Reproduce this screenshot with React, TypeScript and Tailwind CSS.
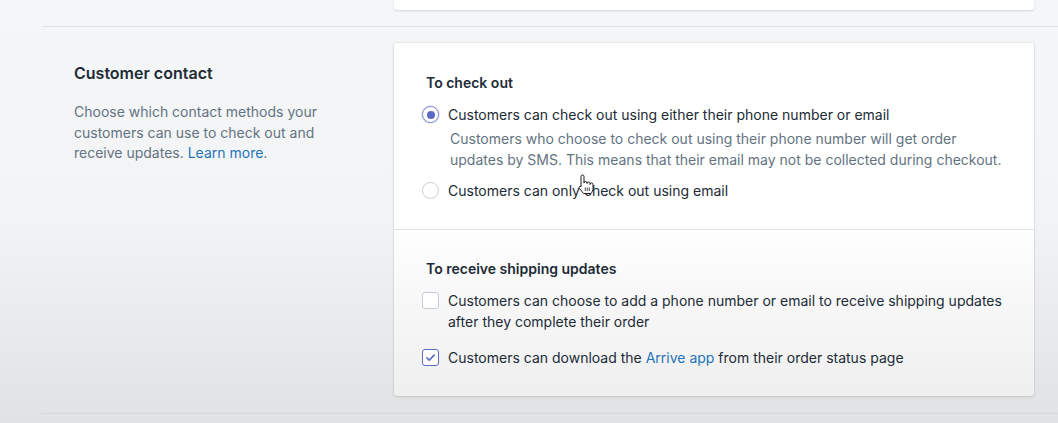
const Radio = ({ checked }: { checked?: boolean }) => (
  <span
    className={
      "mt-[2px] flex h-[17px] w-[17px] shrink-0 items-center justify-center rounded-full border bg-white " +
      (checked ? "border-[#7f88cc] shadow-[0_0_0_1px_#e3e5f5]" : "border-[#c4cdd5]")
    }
  >
    {checked && <span className="h-[8px] w-[8px] rounded-full bg-[#5c6ac4]" />}
  </span>
)

const Checkbox = ({ checked }: { checked?: boolean }) => (
  <span
    className={
      "mt-[2px] flex h-[17px] w-[17px] shrink-0 items-center justify-center rounded-[3px] border bg-white " +
      (checked ? "border-[#5c6ac4]" : "border-[#c4cdd5]")
    }
  >
    {checked && (
      <svg width="11" height="11" viewBox="0 0 12 12" fill="none">
        <path d="M2 6.3l2.6 2.6L10 3.4" stroke="#5c6ac4" strokeWidth="1.8" strokeLinecap="round" strokeLinejoin="round" />
      </svg>
    )}
  </span>
)

// mouse pointer caught in the screenshot
const HandCursor = () => (
  <svg className="absolute left-[577px] top-[174px]" width="17" height="21" viewBox="0 0 17 21">
    <path
      d="M4 2.5A1.5 1.5 0 0 1 7 2.5V9A1.5 1.5 0 0 1 10 9V9.5A1.5 1.5 0 0 1 13 9.5V10.5A1.5 1.5 0 0 1 16 10.5V14.5C16 16.5 15 18 14 19.5H6.5L2.2 14C1.5 13.1 2.6 11.8 3.6 12.5L4 13Z"
      fill="#fff"
      stroke="#1c1c1c"
      strokeWidth="1"
      strokeLinejoin="round"
    />
    <path d="M8.3 13.5v3.5M10.3 13.5v3.5M12.3 13.5v3.5" stroke="#1c1c1c" strokeWidth="0.8" />
  </svg>
)

const App = () => {
  return (
    <div className="relative min-h-screen w-full bg-gradient-to-b from-[#f4f6f8] via-[#f3f4f6] to-[#e1e2e4] font-['Inter',sans-serif] text-[14px] leading-[21px] text-[#212b36] antialiased">
      <div className="pl-[42px]">
        <div className="flex justify-end pr-[24px]">
          <div className="h-[10px] w-[640px] rounded-b-[3px] bg-white shadow-[0_1px_2px_rgba(63,63,68,0.18)]" />
        </div>

        <div className="mt-[16px] flex border-t border-[#dfe3e8] pt-[16px] pb-[17px]">
          <div className="w-[352px] shrink-0 pl-[32px] pt-[19px] pr-[36px]">
            <h2 className="text-[16px] font-semibold leading-[22px] text-[#212b36]">Customer contact</h2>
            <p className="mt-[18px] leading-[20.5px] text-[#637381]">
              Choose which contact methods your customers can use to check out and receive updates.{" "}
              <a className="text-[#1f73b7]">Learn more</a>.
            </p>
          </div>

          <div className="w-[640px] shrink-0 rounded-[3px] bg-gradient-to-b from-white via-white to-[#efefef] shadow-[0_0_0_1px_rgba(63,63,68,0.05),0_1px_3px_rgba(63,63,68,0.15)]">
            <div className="pl-[28px] pr-[24px] pt-[30px] pb-[28px]">
              <h3 className="pl-[4px] font-semibold leading-[20px]">To check out</h3>
              <div className="mt-[11px] flex gap-[9px]">
                <Radio checked />
                <span>Customers can check out using either their phone number or email</span>
              </div>
              <p className="mt-[3px] pl-[28px] text-[#637381]">
                Customers who choose to check out using their phone number will get order updates by SMS. This means that their email may not be collected during checkout.
              </p>
              <div className="mt-[10px] flex gap-[9px]">
                <Radio />
                <span>Customers can only check out using email</span>
              </div>
            </div>

            <div className="border-t border-[#dfe3e8] pl-[28px] pr-[24px] pt-[29px] pb-[28px]">
              <h3 className="pl-[4px] font-semibold leading-[20px]">To receive shipping updates</h3>
              <div className="mt-[11px] flex gap-[9px]">
                <Checkbox />
                <span>Customers can choose to add a phone number or email to receive shipping updates after they complete their order</span>
              </div>
              <div className="mt-[15px] flex gap-[9px]">
                <Checkbox checked />
                <span>
                  Customers can download the <a className="text-[#1f73b7]">Arrive app</a> from their order status page
                </span>
              </div>
            </div>
          </div>
        </div>

        <div className="border-t border-[#d6d7d9]" />
      </div>
      <HandCursor />
    </div>
  )
}

export default App
